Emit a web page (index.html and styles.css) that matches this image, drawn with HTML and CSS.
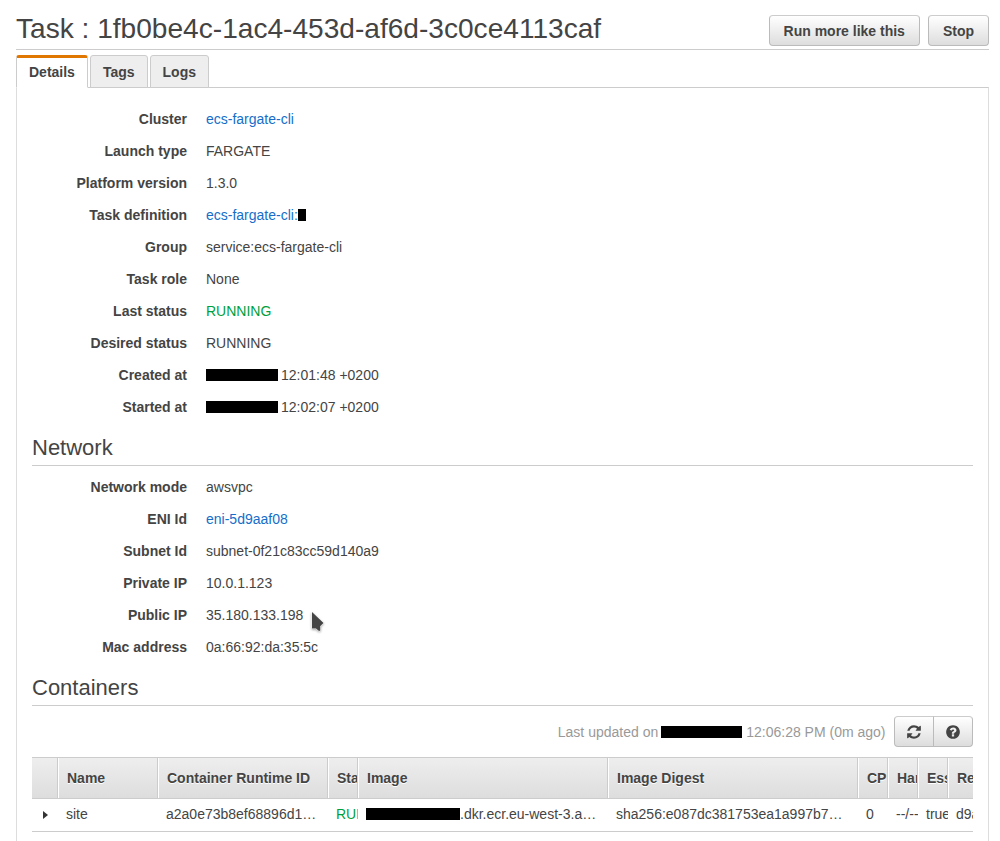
FILE: index.html
```html
<!DOCTYPE html>
<html lang="en">
<head>
<meta charset="utf-8">
<title>Task details</title>
<link rel="stylesheet" href="styles.css">
</head>
<body>
<main class="page">
  <header class="page-header">
    <h1>Task : 1fb0be4c-1ac4-453d-af6d-3c0ce4113caf</h1>
    <div class="actions">
      <button class="btn">Run more like this</button>
      <button class="btn">Stop</button>
    </div>
  </header>
  <nav class="tabs">
    <a class="tab active">Details</a>
    <a class="tab">Tags</a>
    <a class="tab">Logs</a>
  </nav>
  <section class="panel">
    <dl class="props">
      <dt>Cluster</dt><dd><a class="link">ecs-fargate-cli</a></dd>
      <dt>Launch type</dt><dd>FARGATE</dd>
      <dt>Platform version</dt><dd>1.3.0</dd>
      <dt>Task definition</dt><dd><a class="link">ecs-fargate-cli:</a><span class="redact tiny"></span></dd>
      <dt>Group</dt><dd>service:ecs-fargate-cli</dd>
      <dt>Task role</dt><dd>None</dd>
      <dt>Last status</dt><dd class="ok">RUNNING</dd>
      <dt>Desired status</dt><dd>RUNNING</dd>
      <dt>Created at</dt><dd><span class="redact date"></span>12:01:48 +0200</dd>
      <dt>Started at</dt><dd><span class="redact date"></span>12:02:07 +0200</dd>
    </dl>
    <h2>Network</h2>
    <dl class="props">
      <dt>Network mode</dt><dd>awsvpc</dd>
      <dt>ENI Id</dt><dd><a class="link">eni-5d9aaf08</a></dd>
      <dt>Subnet Id</dt><dd>subnet-0f21c83cc59d140a9</dd>
      <dt>Private IP</dt><dd>10.0.1.123</dd>
      <dt>Public IP</dt><dd>35.180.133.198</dd>
      <dt>Mac address</dt><dd>0a:66:92:da:35:5c</dd>
    </dl>
    <h2>Containers</h2>
    <div class="toolbar">
      <span class="updated">Last updated on</span><span class="redact stamp"></span><span class="updated">12:06:28 PM (0m ago)</span>
      <div class="btn-group">
        <button class="btn icon-btn" aria-label="Refresh"><svg viewBox="0 0 1792 1792"><path d="M1639 1056q0 5-1 7-64 268-268 434.5t-478 166.5q-146 0-282.5-55t-243.5-157l-129 129q-19 19-45 19t-45-19-19-45v-448q0-26 19-45t45-19h448q26 0 45 19t19 45-19 45l-137 137q71 66 161 102t187 36q134 0 250-65t186-179q11-17 53-117 8-23 30-23h192q13 0 22.5 9.5t9.5 22.5zm25-800v448q0 26-19 45t-45 19h-448q-26 0-45-19t-19-45 19-45l138-138q-148-137-349-137-134 0-250 65t-186 179q-11 17-53 117-8 23-30 23h-199q-13 0-22.5-9.5t-9.5-22.5v-7q65-268 270-434.5t480-166.5q146 0 284 55.5t245 156.5l130-129q19-19 45-19t45 19 19 45z"/></svg></button>
        <button class="btn icon-btn" aria-label="Help"><svg viewBox="0 0 1792 1792"><path d="M1024 1376v-192q0-14-9-23t-23-9h-192q-14 0-23 9t-9 23v192q0 14 9 23t23 9h192q14 0 23-9t9-23zm256-672q0-88-55.5-163t-138.5-116-170-41q-243 0-371 213-15 24 8 42l132 100q7 6 19 6 16 0 25-12 53-68 86-92 34-24 86-24 48 0 85.5 26t37.5 59q0 38-20 61t-68 45q-63 28-115.5 86.5t-52.5 125.5v36q0 14 9 23t23 9h192q14 0 23-9t9-23q0-19 21.5-49.5t54.5-49.5q32-18 49-28.5t46-35 44.5-48 28-60.5 12.5-81zm384 192q0 209-103 385.5t-279.5 279.5-385.5 103-385.5-103-279.5-279.5-103-385.5 103-385.5 279.5-279.5 385.5-103 385.5 103 279.5 279.5 103 385.5z"/></svg></button>
      </div>
    </div>
    <div class="table">
      <div class="row head">
        <span></span><span>Name</span><span>Container Runtime ID</span><span>Stat</span><span>Image</span><span>Image Digest</span><span>CP</span><span>Har</span><span>Ess</span><span>Re</span>
      </div>
      <div class="row body">
        <span class="expander"><svg viewBox="0 0 5 8"><path d="M0 0L5 4L0 8Z"/></svg></span><span>site</span><span>a2a0e73b8ef68896d1…</span><span class="ok">RUN</span><span><i class="redact registry"></i>.dkr.ecr.eu-west-3.a…</span><span>sha256:e087dc381753ea1a997b7…</span><span>0</span><span>--/--</span><span>true</span><span>d9a</span>
      </div>
    </div>
  </section>
</main>
<svg class="cursor" viewBox="0 0 16 24"><path d="M2 2V18.500H6L9 21L10.300 20.500V16L13.500 13Z"/></svg>
</body>
</html>
```
FILE: styles.css
```css
* { box-sizing: border-box; }
body {
  margin: 0;
  height: 841px;
  overflow: hidden;
  background: #fff;
  color: #444;
  font: 14px/20px "Liberation Sans", Arial, sans-serif;
}
.page { height: 841px; padding: 0 11px 0 16px; display: flex; flex-direction: column; }
.page-header {
  display: flex;
  justify-content: space-between;
  flex: none;
  height: 50px;
  border-bottom: 1px solid #ccc;
}
h1 { margin: 0; padding-top: 11px; font-size: 28.1px; line-height: 36px; font-weight: 400; }
.actions { display: flex; gap: 8px; padding-top: 15px; }
.btn {
  height: 31px;
  padding: 0 14px;
  border: 1px solid #bbb;
  border-top-color: #ccc;
  border-radius: 4px;
  background: linear-gradient(#fff, #ddd);
  color: #444;
  font: bold 14px/20px "Liberation Sans", Arial, sans-serif;
}
.tabs { display: flex; flex: none; gap: 2px; height: 33px; margin-top: 5px; position: relative; }
.tab {
  height: 33px;
  padding: 6px 12px 0;
  border: 1px solid #ccc;
  border-radius: 3px 3px 0 0;
  background: #eee;
  font-weight: bold;
}
.tab.active { padding-top: 4px; border-top: 3px solid #e07700; border-bottom-color: #fff; background: #fff; }
.panel { flex: 1; min-height: 0; margin-top: -1px; padding: 15px 15px 0; border: 1px solid #ddd; border-top-color: #ccc; border-bottom: 0; }
.props { display: grid; grid-template-columns: 155px 1fr; column-gap: 19px; grid-auto-rows: 32px; margin: 0; line-height: 32px; }
dt { text-align: right; font-weight: bold; }
dd { margin: 0; display: flex; align-items: center; }
.link { color: #146eca; }
.ok { color: #009f3c; }
.redact { display: inline-block; background: #000; height: 12px; }
.tiny { width: 8px; }
.date { width: 72px; margin-right: 3px; }
.stamp { width: 81px; margin: 0 4px 0 3px; }
.registry { width: 94px; vertical-align: -1px; }
h2 { margin: 0 0 5px; height: 43px; padding-top: 11px; border-bottom: 1px solid #ccc; font-size: 22px; line-height: 28px; font-weight: 400; }
.toolbar { display: flex; align-items: center; justify-content: flex-end; height: 31px; margin-top: 10px; }
.updated { color: #999; }
.btn-group { display: flex; margin-left: 8.5px; }
.icon-btn { width: 40px; padding: 0; display: flex; align-items: center; justify-content: center; }
.icon-btn:first-child { border-radius: 4px 0 0 4px; }
.icon-btn:last-child { margin-left: -1px; border-radius: 0 4px 4px 0; }
.icon-btn svg { width: 16px; height: 16px; fill: #444; }
.table { margin-top: 10px; }
.row { display: grid; grid-template-columns: 26px 100px 170px 30px 250px 250px 30px 30px 30px 25px; border-bottom: 1px solid #ccc; width: 941px; }
.row > span { overflow: hidden; white-space: nowrap; }
.head { height: 42px; border-top: 1px solid #ccc; background: linear-gradient(#eee, #ddd); font-weight: bold; line-height: 40px; text-shadow: 0 1px 0 #fff; }
.head > span { padding-left: 8px; border-left: 1px solid #fff; border-right: 1px solid #ccc; }
.head > span:first-child { border-left: 0; }
.head > span:last-child { border-right: 0; }
.body { height: 33px; line-height: 31px; }
.body > span { padding-left: 8px; }
.body .expander { display: flex; align-items: center; padding-left: 11px; }
.expander svg { width: 5px; height: 8px; fill: #333; }
.cursor { position: absolute; left: 310px; top: 610px; width: 16px; height: 24px; fill: #444; stroke: #fff; stroke-width: 1; paint-order: stroke; filter: drop-shadow(0 1px 1px #aaa); }
```
